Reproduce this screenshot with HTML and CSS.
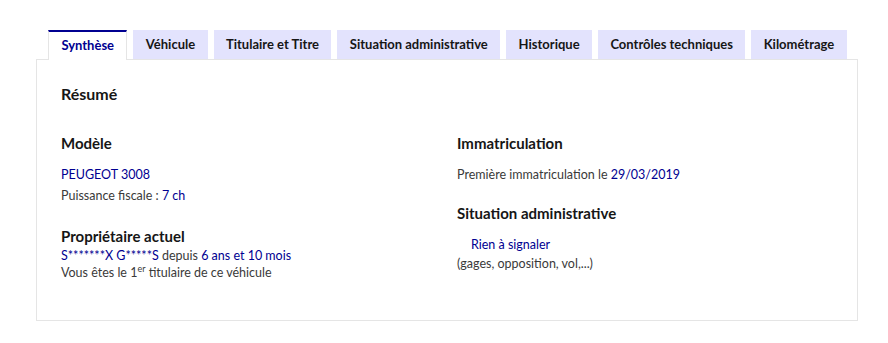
FILE: index.html
```html
<!DOCTYPE html>
<html lang="fr">
<head>
  <meta charset="UTF-8">
  <title>Rapport - Synthèse</title>
  <link rel="stylesheet" href="styles.css">
</head>
<body>
  <div class="report">
    <ul class="tabs">
      <li class="tab active">Synthèse</li>
      <li class="tab">Véhicule</li>
      <li class="tab">Titulaire et Titre</li>
      <li class="tab">Situation administrative</li>
      <li class="tab">Historique</li>
      <li class="tab">Contrôles techniques</li>
      <li class="tab">Kilométrage</li>
    </ul>

    <div class="panel">
      <h2 class="panel-title">Résumé</h2>

      <div class="columns">
        <div class="col">
          <section class="block">
            <h3>Modèle</h3>
            <p class="line"><span class="hl">PEUGEOT 3008</span></p>
            <p class="line">Puissance fiscale : <span class="hl">7 ch</span></p>
          </section>

          <section class="block owner">
            <h3>Propriétaire actuel</h3>
            <p class="line tight"><span class="hl">S*******X G*****S</span> depuis <span class="hl">6 ans et 10 mois</span></p>
            <p class="line tight">Vous êtes le 1<sup>er</sup> titulaire de ce véhicule</p>
          </section>
        </div>

        <div class="col">
          <section class="block">
            <h3>Immatriculation</h3>
            <p class="line">Première immatriculation le <span class="hl">29/03/2019</span></p>
          </section>

          <section class="block admin">
            <h3>Situation administrative</h3>
            <p class="line status"><span class="hl">Rien à signaler</span></p>
            <p class="line">(gages, opposition, vol,...)</p>
          </section>
        </div>
      </div>
    </div>
  </div>
</body>
</html>
```

FILE: styles.css
```css
:root {
  --blue: #000091;
  --tab-bg: #e3e3fd;
  --text: #161616;
  --body: #3a3a3a;
  --border: #e5e5e5;
}

body {
  font-family: Lato, 'Noto Sans', sans-serif;
  margin: 0;
  padding: 0;
  background-color: white;
  color: var(--text);
}

.report {
  margin: 30px 30px 0 36px;
}

.tabs {
  list-style: none;
  display: flex;
  gap: 6px;
  margin: 0 0 0 12px;
  padding: 0;
}

.tab {
  background-color: var(--tab-bg);
  font-size: 13px;
  font-weight: bold;
  color: var(--text);
  height: 29px;
  line-height: 29px;
  padding: 0 12.4px;
}

.tab.active {
  background-color: white;
  color: var(--blue);
  border-top: 2px solid var(--blue);
  border-left: 1px solid var(--border);
  border-right: 1px solid var(--border);
  height: 28px;
  line-height: 27px;
  margin-bottom: -1px;
  position: relative;
}

.panel {
  border: 1px solid var(--border);
  height: 262px;
  padding: 0 24px;
  box-sizing: border-box;
  width: 822px;
}

.panel-title {
  font-size: 16px;
  margin: 22px 0 0;
  line-height: 24px;
}

.columns {
  display: grid;
  grid-template-columns: 376px 1fr;
  gap: 20px;
  margin-top: 26px;
}

h3 {
  font-size: 15px;
  margin: 0 0 10px;
  line-height: 22px;
}

.line {
  font-size: 12.5px;
  color: var(--body);
  margin: 0;
  line-height: 21px;
}

.line.tight {
  line-height: 17px;
}

.hl {
  color: var(--blue);
}

sup {
  font-size: 9px;
  line-height: 0;
}

.owner {
  margin-top: 19px;
}

.owner h3 {
  margin-bottom: 0;
  line-height: 22px;
}

.admin {
  margin-top: 17px;
}

.status {
  padding-left: 14px;
  line-height: 16px;
  margin-top: 13px;
}
```
